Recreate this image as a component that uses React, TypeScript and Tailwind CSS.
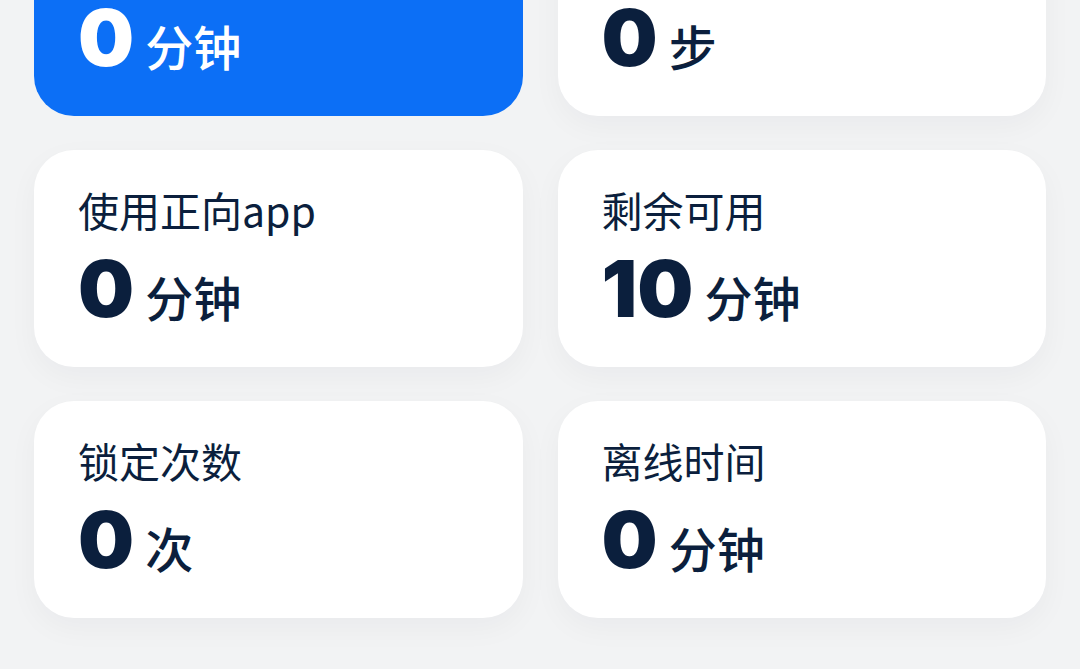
import React from 'react';

type Stat = {
  label: string;
  value: string;
  unit: string;
  active?: boolean;
};

const stats: Stat[] = [
  { label: '今日专注', value: '0', unit: '分钟', active: true },
  { label: '今日步数', value: '0', unit: '步' },
  { label: '使用正向app', value: '0', unit: '分钟' },
  { label: '剩余可用', value: '10', unit: '分钟' },
  { label: '锁定次数', value: '0', unit: '次' },
  { label: '离线时间', value: '0', unit: '分钟' },
];

function StatCard({ label, value, unit, active }: Stat) {
  return (
    <div
      className={
        active
          ? 'h-[217px] rounded-[40px] bg-[#0c6ff6] px-[44px] pt-[39px] text-white'
          : 'h-[217px] rounded-[40px] bg-white px-[44px] pt-[39px] text-[#0b1f3d] shadow-[0_10px_30px_rgba(20,30,50,0.04)]'
      }
    >
      <div className="text-[41px] leading-none font-normal">{label}</div>
      <div className="mt-[19px] flex items-baseline gap-[11px]">
        <span className="font-['Inter',sans-serif] text-[79px] leading-none font-black">
          {value}
        </span>
        <span className="text-[48px] leading-none font-medium">{unit}</span>
      </div>
    </div>
  );
}

export default function App() {
  return (
    <div className="h-[669px] w-[1080px] overflow-hidden bg-[#f2f3f4] font-['Noto_Sans_CJK_SC','Noto_Sans',sans-serif]">
      {/* Stats grid */}
      <div className="-mt-[101px] grid grid-cols-2 gap-x-[35px] gap-y-[34px] px-[34px]">
        {stats.map((s) => (
          <StatCard key={s.label} {...s} />
        ))}
      </div>
    </div>
  );
}
